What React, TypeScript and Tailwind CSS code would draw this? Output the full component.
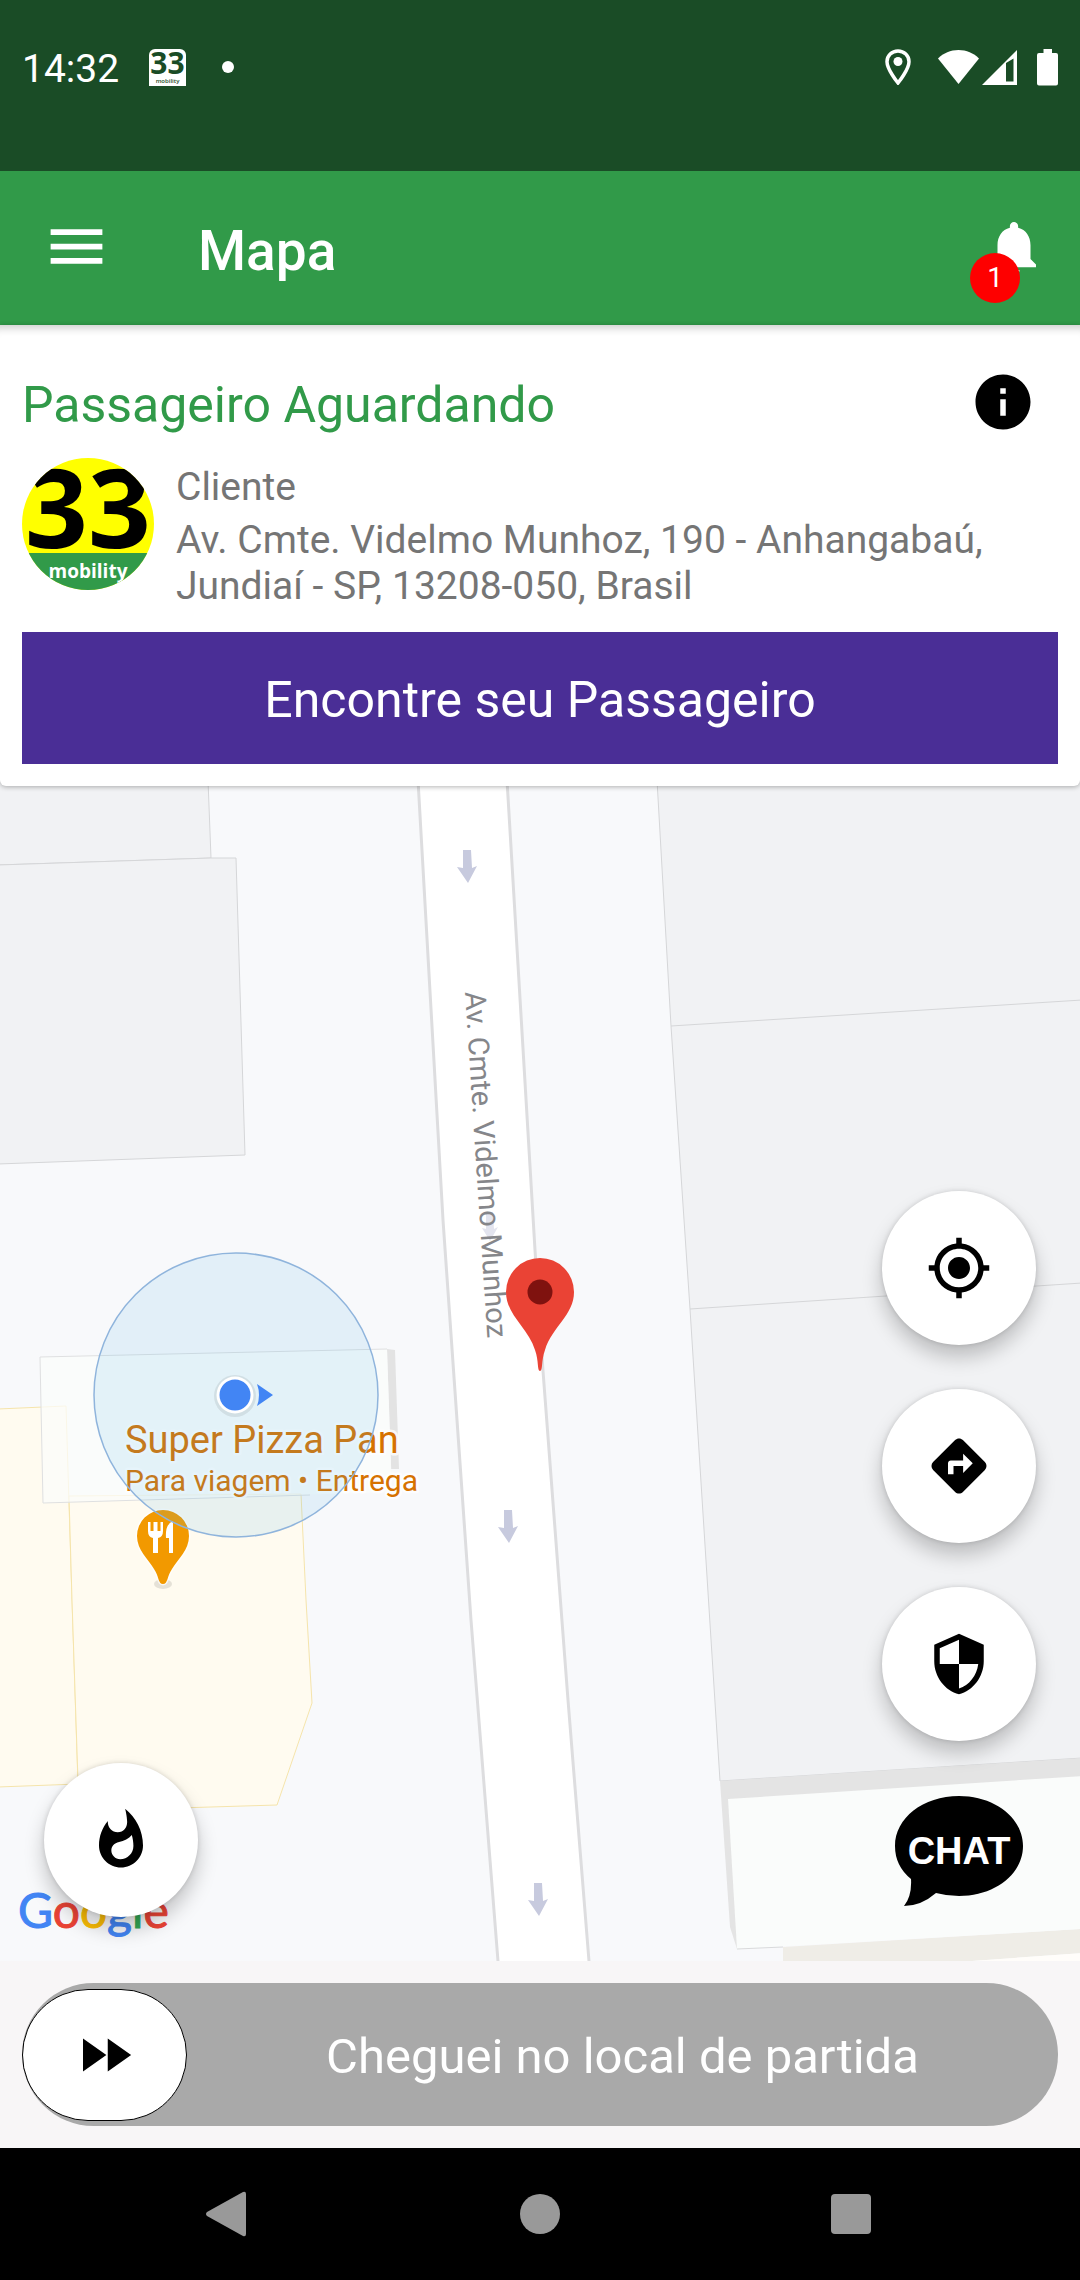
import {
    MdDirections,
    MdFastForward,
    MdInfo,
    MdMenu,
    MdMyLocation,
    MdNotifications,
    MdSecurity,
    MdWhatshot,
} from "react-icons/md";

const mapActions = [
    { label: "Minha localização", icon: MdMyLocation },
    { label: "Rotas", icon: MdDirections },
    { label: "Segurança", icon: MdSecurity },
];

const roadArrows = [
    { x: 467, y: 850 },
    { x: 508, y: 1510 },
    { x: 538, y: 1883 },
];

const googleLetters = [
    { char: "G", color: "#4285f4" },
    { char: "o", color: "#ea4335" },
    { char: "o", color: "#fbbc05" },
    { char: "g", color: "#4285f4" },
    { char: "l", color: "#34a853" },
    { char: "e", color: "#ea4335" },
];

function StatusBar() {
    return (
        <div className="h-[171px] bg-[#1a4c26] text-white">
            <div className="flex h-[134px] items-center justify-between px-[22px]">
                <div className="flex items-center">
                    <span className="pt-1 text-[39px] leading-[46px]">14:32</span>
                    <svg viewBox="0 0 37 37" className="ml-[30px] h-[37px] w-[37px]">
                        <path d="M0 37V6a6 6 0 0 1 6-6h25a6 6 0 0 1 6 6v31z" fill="#fff" />
                        <text x="18.5" y="25" textAnchor="middle" fontFamily="Open Sans" fontWeight="700" fontSize="30" fill="#1a4c26">33</text>
                        <text x="18.5" y="34" textAnchor="middle" fontFamily="Open Sans" fontWeight="600" fontSize="6" fill="#1a4c26">mobility</text>
                    </svg>
                    <span className="ml-9 h-3 w-3 rounded-full bg-white" />
                </div>
                <div className="flex items-center">
                    <svg viewBox="0 0 26 36" className="h-9 w-[26px]">
                        <path d="M13 2C6.9 2 2 6.700 2 12.700 2 20.500 13 34 13 34s11-13.500 11-21.300C24 6.700 19.100 2 13 2z" fill="none" stroke="#fff" strokeWidth="3.500" />
                        <circle cx="13" cy="12.500" r="4.500" fill="#fff" />
                    </svg>
                    <svg viewBox="0 0 41 36" className="ml-[27px] h-9 w-[41px]">
                        <path d="M20.500 35L0 9.500C5.500 4 12.500 1 20.500 1S35.500 4 41 9.500z" fill="#fff" />
                    </svg>
                    <svg viewBox="0 0 35 36" className="ml-[3px] h-9 w-[35px]">
                        <path fillRule="evenodd" d="M0 36L35 1v35zM24 14v18.500h7.500V9.500z" fill="#fff" />
                    </svg>
                    <svg viewBox="0 0 21 37" className="ml-5 h-[37px] w-[21px]">
                        <path d="M6.500 0h8.500v4h4a2 2 0 0 1 2 2v28.500a2 2 0 0 1-2 2H2a2 2 0 0 1-2-2V6a2 2 0 0 1 2-2h4.500z" fill="#fff" />
                    </svg>
                </div>
            </div>
        </div>
    );
}

function AppBar() {
    return (
        <header className="flex h-[154px] items-center justify-between bg-[#319a49] pl-[42px] pr-[33px] text-white">
            <div className="flex items-center">
                <button type="button" aria-label="Abrir menu" className="pb-1">
                    <MdMenu size={69} />
                </button>
                <h1 className="ml-[87px] pt-[6px] text-[55px] font-medium leading-[66px]">Mapa</h1>
            </div>
            <button type="button" aria-label="Notificações" className="relative">
                <MdNotifications size={66} />
                <span className="absolute -left-[11px] top-[38px] flex h-[50px] w-[50px] items-center justify-center rounded-full bg-[#fe0000] text-[28px] leading-none">
                    1
                </span>
            </button>
        </header>
    );
}

function Avatar() {
    return (
        <svg viewBox="0 0 132 132" className="h-[132px] w-[132px] shrink-0">
            <clipPath id="avatar">
                <circle cx="66" cy="66" r="66" />
            </clipPath>
            <g clipPath="url(#avatar)">
                <rect width="132" height="132" fill="#ffff00" />
                <text x="66" y="90" textAnchor="middle" fontFamily="Open Sans" fontWeight="700" fontSize="110">33</text>
                <rect y="95" width="132" height="37" fill="#319a49" />
                <text x="66" y="120" textAnchor="middle" fontFamily="Open Sans" fontWeight="700" fontSize="19" fill="#fff">mobility</text>
            </g>
        </svg>
    );
}

function PassengerCard() {
    return (
        <section className="relative z-10 rounded-b-md bg-white px-[22px] pb-[22px] pt-11 shadow-[inset_0_11px_8px_-8px_rgba(0,0,0,0.2),0_1px_5px_rgba(0,0,0,0.3)]">
            <div className="flex items-start justify-between">
                <h2 className="text-[50px] leading-[72px] text-[#319a49]">Passageiro Aguardando</h2>
                <button type="button" aria-label="Informações" className="mr-[22px] text-black">
                    <MdInfo size={66} />
                </button>
            </div>
            <div className="mt-[17px] flex gap-[22px] text-[39px] leading-[46px] text-[#757575]">
                <Avatar />
                <div className="pt-[6px]">
                    <p>Cliente</p>
                    <p className="mt-[7px]">Av. Cmte. Videlmo Munhoz, 190 - Anhangabaú, Jundiaí - SP, 13208-050, Brasil</p>
                </div>
            </div>
            <button type="button" className="mt-[23px] h-[132px] w-full bg-[#4a2e96] pt-1 text-[50px] text-white">
                Encontre seu Passageiro
            </button>
        </section>
    );
}

function MapCanvas() {
    return (
        <svg
            viewBox="0 786 1080 1175"
            preserveAspectRatio="xMidYMid slice"
            className="absolute inset-0 h-full w-full"
            role="img"
            aria-label="Mapa da região"
        >
            <rect y="700" width="1080" height="1400" fill="#f8f9fb" />

            {/* Blocks on the left */}
            <g fill="#f1f2f4" stroke="#d5d6d8" strokeWidth="1">
                <path d="M-2 780H208L211 858L-2 865z" />
                <path d="M-2 865L211 858H236L245 1155L-2 1164z" />
            </g>

            {/* Blocks on the right */}
            <path d="M657 780L671 1026L690 1309L720 1781L1082 1758V780z" fill="#f1f2f4" stroke="#d5d6d8" strokeWidth="1" />
            <path d="M671 1026L1082 1000M690 1309L1082 1283" stroke="#d5d6d8" strokeWidth="1" />
            <path d="M720 1781L1082 1758V1800L760 1940L737 1949L730 1927z" fill="#e4e4e4" />
            <path d="M783 1947L1082 1929V1953L972 1961H783z" fill="#efede7" />
            <path d="M972 1961L1082 1953V1961z" fill="#fffdfa" />
            <path d="M728 1799L1082 1776V1929L737 1949z" fill="#fafcfb" />
            <path d="M737 1949L783 1947" stroke="#d9dadb" strokeWidth="1" />

            {/* Road */}
            <path d="M418 786L443 1220L471 1620L498 1961H589L568 1700L543 1371L535 1250L507 786z" fill="#fff" />
            <path d="M418 780L443 1220L471 1620L498 1961M507 780L535 1250L543 1371L568 1700L589 1961" fill="none" stroke="#dddddf" strokeWidth="3" />
            <path d="M486 1212h7l1 17l4-2l-8 14l-8-13l4 1z" fill="#c7cade" fillOpacity="0.5" />
            {roadArrows.map((arrow) => (
                <path
                    key={arrow.y}
                    d="M-4 0H4L5 18L10 16L1 33L-10 17L-4 18z"
                    fill="#c7cade"
                    transform={`translate(${arrow.x} ${arrow.y})`}
                />
            ))}

            {/* Restaurant plot */}
            <g fill="#fffbf0" stroke="#f5e4ab" strokeWidth="1">
                <path d="M-2 1409L66 1406L72 1600L78 1784L-2 1787z" />
                <path d="M69 1496L301 1494L306 1600L312 1703L277 1805L79 1811L72 1600z" />
            </g>
            <path d="M387 1349L395 1350L399 1469L391 1469z" fill="#e3e3e3" />
            <path d="M40 1357L387 1349L392 1492L43 1503z" fill="#fbfcfb" fillOpacity="0.75" />
            <path d="M310 1495L43 1503L40 1357L387 1349" fill="none" stroke="#dfe0e1" strokeWidth="1" />

            {/* Place labels */}
            <g fontFamily="Roboto" fill="#d67200" stroke="#fff" strokeOpacity="0.8" strokeWidth="5" strokeLinejoin="round" paintOrder="stroke">
                <text x="125" y="1453" fontSize="38">Super Pizza Pan</text>
                <text x="125" y="1491" fontSize="30">Para viagem • Entrega</text>
            </g>
            <text fontFamily="Roboto" fontSize="29" fill="#85868a" transform="translate(465 992) rotate(86.300)">
                Av. Cmte. Videlmo Munhoz
            </text>

            {/* Restaurant pin */}
            <ellipse cx="163" cy="1584" rx="9" ry="5" fill="#000" fillOpacity="0.1" />
            <path d="M163 1584C158 1584 159 1576 154 1569C148 1559 137 1550 137 1536A26 26 0 0 1 189 1536C189 1550 178 1559 172 1569C167 1576 168 1584 163 1584z" fill="#f29900" stroke="#fff" strokeOpacity="0.7" strokeWidth="3" paintOrder="stroke" />
            <path d="M148 1522v9q0 6 5 7v15h5v-15q5-1 5-7v-9h-2.500v9h-3v-9h-4v9h-3v-9zM173 1521q-8 3-7 17h3v15h4z" fill="#fff" />

            {/* Current position */}
            <circle cx="236" cy="1395" r="142" fill="#4aaee8" fillOpacity="0.130" stroke="#8fb4dc" strokeWidth="1.500" />
            <circle cx="235" cy="1396" r="21" fill="#000" fillOpacity="0.080" />
            <circle cx="235" cy="1395" r="18.500" fill="#fff" />
            <circle cx="235" cy="1395" r="15.500" fill="#4285f4" />
            <path d="M257 1384L273 1395L257 1406Q261 1395 257 1384z" fill="#4285f4" />

            {/* Pick-up pin */}
            <path d="M540 1371C537 1371 539 1361 535 1350C528 1327 506 1315 506 1292A34 34 0 0 1 574 1292C574 1315 552 1327 545 1350C541 1361 543 1371 540 1371z" fill="#ea4335" />
            <circle cx="540" cy="1292" r="12.500" fill="#7f120f" />

            <text x="18" y="1928" fontFamily="Lato" fontSize="48" strokeWidth="1">
                {googleLetters.map((letter, i) => (
                    <tspan key={i} fill={letter.color} stroke={letter.color}>{letter.char}</tspan>
                ))}
            </text>
        </svg>
    );
}

function ChatIcon() {
    return (
        <svg viewBox="0 0 128 110" className="h-[110px] w-32">
            <path d="M64 0C100 0 128 22 128 50S100 100 64 100Q52 100 41 97Q26 110 9 110Q17 100 16 83Q0 70 0 50C0 22 28 0 64 0z" fill="#000" />
            <text x="64" y="68" textAnchor="middle" fontFamily="Liberation Sans" fontWeight="700" fontSize="38" fill="#fff">CHAT</text>
        </svg>
    );
}

function MapView() {
    const fab = "flex h-[154px] w-[154px] items-center justify-center rounded-full bg-white text-black shadow-[0_12px_20px_rgba(0,0,0,0.22),0_0_5px_rgba(0,0,0,0.14)]";

    return (
        <main className="relative min-h-[800px] flex-1 overflow-hidden">
            <MapCanvas />
            <button type="button" aria-label="Áreas quentes" className={`absolute bottom-11 left-11 ${fab}`}>
                <MdWhatshot size={66} />
            </button>
            <div className="absolute bottom-11 right-11 flex flex-col items-center gap-11">
                {mapActions.map(({ label, icon: Icon }) => (
                    <button key={label} type="button" aria-label={label} className={fab}>
                        <Icon size={66} />
                    </button>
                ))}
                <button type="button" className="flex h-[132px] items-center">
                    <ChatIcon />
                </button>
            </div>
        </main>
    );
}

function ArrivalSlider() {
    return (
        <div className="bg-[#f8f6f7] p-[22px]">
            <div className="flex h-[143px] items-center rounded-full bg-[#a9a9a9]">
                <button
                    type="button"
                    aria-labelledby="arrival"
                    className="flex h-[132px] w-[165px] items-center justify-center rounded-full border border-black bg-white text-black"
                >
                    <MdFastForward size={66} />
                </button>
                <span id="arrival" className="flex-1 pt-1 text-center text-[49px] text-white">
                    Cheguei no local de partida
                </span>
            </div>
        </div>
    );
}

function NavigationBar() {
    return (
        <nav className="grid h-[132px] grid-cols-3 place-items-center bg-black px-[74px]">
            <button type="button" aria-label="Voltar">
                <svg viewBox="0 0 48 48" className="h-12 w-12" fill="#999">
                    <path d="M38 2q3-1 3 2v40q0 3-3 2L2 26q-2-2 0-4z" />
                </svg>
            </button>
            <button type="button" aria-label="Início">
                <span className="block h-10 w-10 rounded-full bg-[#999]" />
            </button>
            <button type="button" aria-label="Recentes">
                <span className="block h-10 w-10 rounded-sm bg-[#999]" />
            </button>
        </nav>
    );
}

export default function App() {
    return (
        <div className="flex min-h-screen flex-col bg-[#f1f2f4] font-['Roboto',sans-serif]">
            <StatusBar />
            <AppBar />
            <PassengerCard />
            <MapView />
            <ArrivalSlider />
            <NavigationBar />
        </div>
    );
}
